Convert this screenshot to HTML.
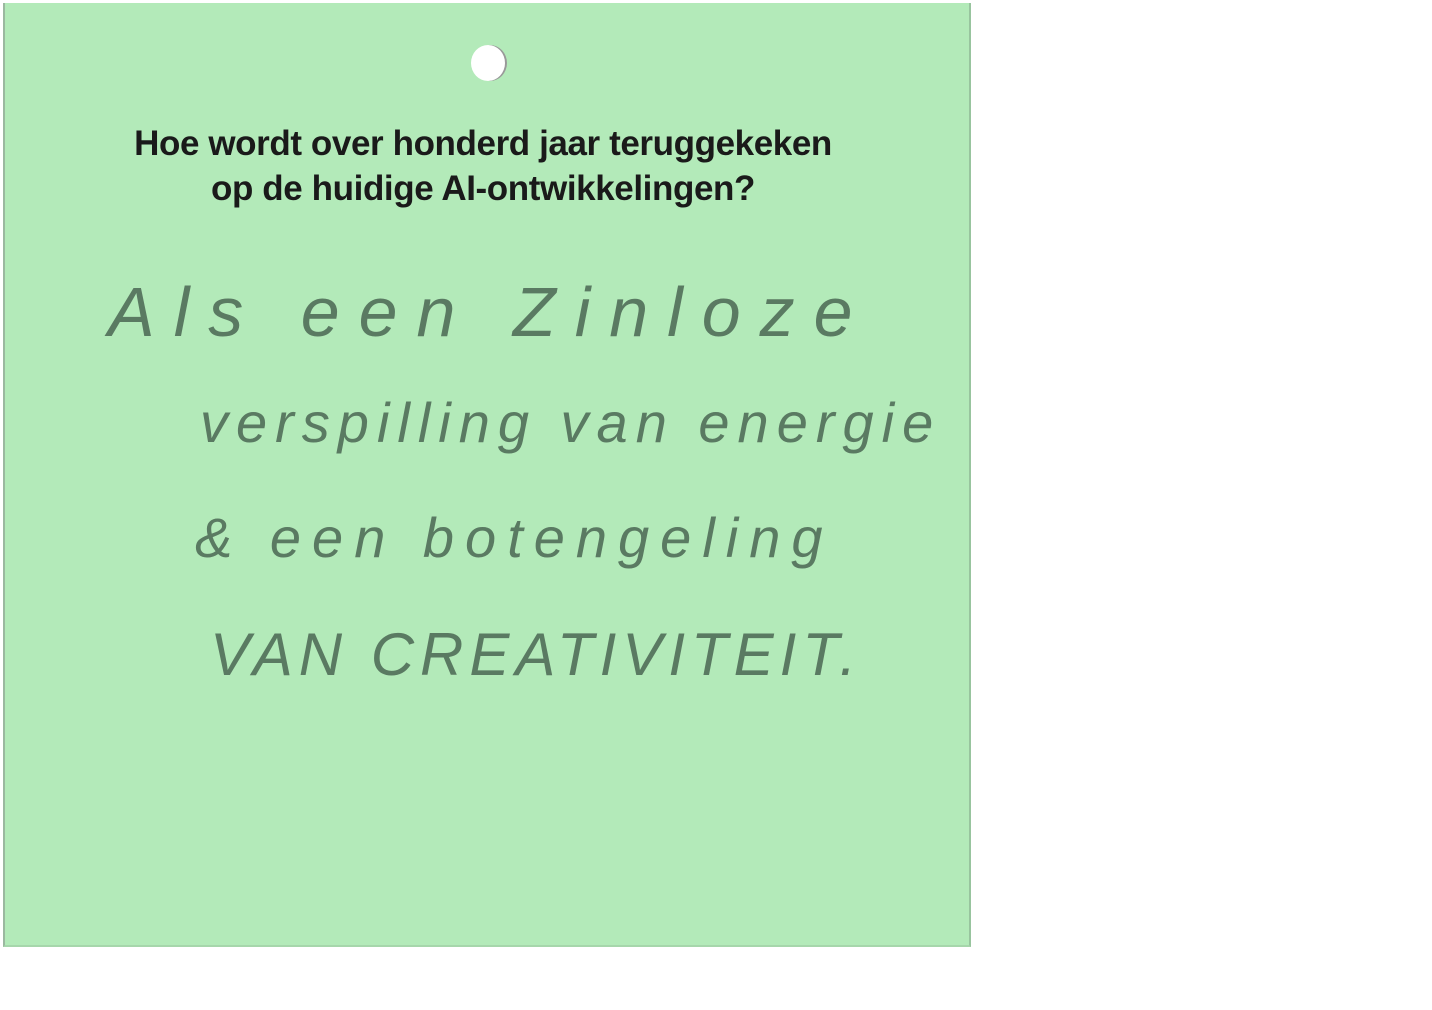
<!DOCTYPE html>
<html><head><meta charset="utf-8"><style>
html,body{margin:0;padding:0;background:#fff;width:1432px;height:1010px;overflow:hidden;position:relative}
.card{position:absolute;left:3px;top:3px;width:964px;height:942px;background:#b3eab9;border-left:2px solid #9bb8a0;border-right:2px solid #98c49e;border-bottom:2px solid #a6d6ab}
.hole{position:absolute;left:471px;top:45px;width:34px;height:36px;border-radius:50%;background:#fff;box-shadow:2px 0 0 #999}
.q{position:absolute;left:0;width:966px;text-align:center;font-family:"Liberation Sans",sans-serif;font-weight:bold;font-size:35px;color:#1a1a1a;line-height:45px;top:121px;letter-spacing:-0.4px}
.h{position:absolute;font-family:"Liberation Sans",sans-serif;font-style:italic;color:#5a7a62;font-weight:normal;white-space:nowrap}
</style></head><body>
<div class="card"></div>
<div class="hole"></div>
<div class="q">Hoe wordt over honderd jaar teruggekeken<br>op de huidige AI-ontwikkelingen?</div>
<div class="h" style="left:108px;top:272px;font-size:70px;letter-spacing:19px">Als een Zinloze</div>
<div class="h" style="left:200px;top:390px;font-size:56px;letter-spacing:8px">verspilling van energie</div>
<div class="h" style="left:195px;top:505px;font-size:56px;letter-spacing:11px">&amp; een botengeling</div>
<div class="h" style="left:210px;top:620px;font-size:60px;letter-spacing:6px">VAN CREATIVITEIT.</div>
</body></html>
